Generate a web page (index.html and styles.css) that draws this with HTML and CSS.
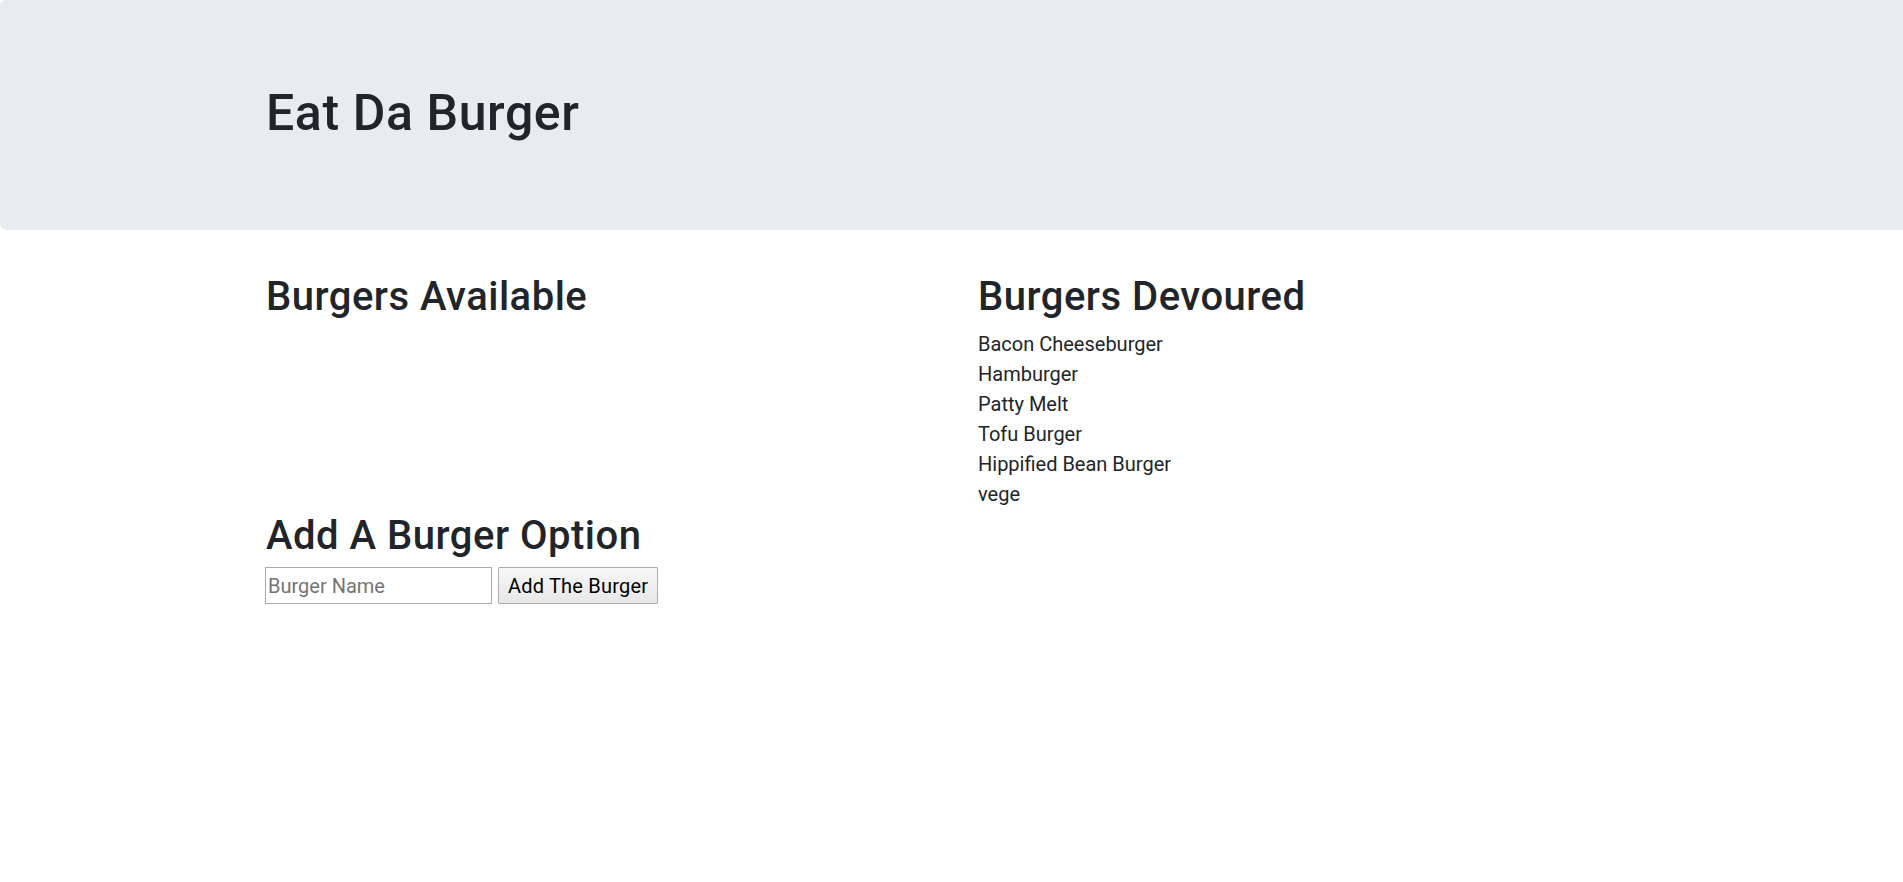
FILE: index.html
```html
<!DOCTYPE html>
<html lang="en">
<head>
<meta charset="utf-8">
<title>Eat Da Burger</title>
<link rel="stylesheet" href="styles.css">
</head>
<body>
<header class="jumbotron">
  <div class="container">
    <h1 class="title">Eat Da Burger</h1>
  </div>
</header>
<main class="container">
  <div class="row">
    <section class="col">
      <h2 class="heading">Burgers Available</h2>
      <div class="list"></div>
    </section>
    <section class="col">
      <h2 class="heading">Burgers Devoured</h2>
      <div class="list">
        <div class="item">Bacon Cheeseburger</div>
        <div class="item">Hamburger</div>
        <div class="item">Patty Melt</div>
        <div class="item">Tofu Burger</div>
        <div class="item">Hippified Bean Burger</div>
        <div class="item">vege</div>
      </div>
    </section>
  </div>
  <section class="add">
    <h2 class="heading">Add A Burger Option</h2>
    <form class="form">
      <input class="input" type="text" placeholder="Burger Name">
      <button class="btn" type="button">Add The Burger</button>
    </form>
  </section>
</main>
</body>
</html>
```
FILE: styles.css
```css
html, body {
  margin: 0;
  padding: 0;
}
body {
  font-family: Roboto, "Noto Sans", sans-serif;
  font-size: 20px;
  line-height: 30px;
  color: #212529;
  background: #fff;
  overflow-x: hidden;
}
.container {
  box-sizing: border-box;
  width: 1425px;
  margin-left: calc((100% - 1425px) / 2 + 9px);
  padding: 0 18px;
}
.jumbotron {
  background: #e9ecef;
  padding: 80px 0;
  margin-bottom: 40px;
  border-radius: 6px 0 0 6px;
}
.title {
  margin: 0 0 7px;
  padding-top: 3px;
  font-size: 50px;
  line-height: 60px;
  font-weight: 500;
  letter-spacing: 0.6px;
}
.row {
  display: flex;
}
.col {
  flex: 0 0 712px;
}
.heading {
  margin: 0 0 7px;
  padding-top: 3px;
  font-size: 40px;
  line-height: 48px;
  font-weight: 500;
  letter-spacing: 0.5px;
}
.item {
  padding-top: 1px;
  margin-bottom: -1px;
}
.add {
  margin-top: 1px;
}
.form {
  display: flex;
  gap: 6px;
  margin-left: -1px;
}
.input {
  box-sizing: border-box;
  width: 227px;
  height: 37px;
  padding: 1px 2px;
  border: 1px solid #a9a9a9;
  font-family: inherit;
  font-size: 20px;
  color: #212529;
  background: #fff;
}
.input::placeholder {
  color: #757575;
}
.btn {
  box-sizing: border-box;
  height: 37px;
  padding: 0 9px;
  border: 1px solid #adadad;
  border-radius: 1px;
  background: linear-gradient(#f6f6f6, #e8e8e8);
  font-family: inherit;
  font-size: 20px;
  color: #000;
  letter-spacing: 0.2px;
}
```
